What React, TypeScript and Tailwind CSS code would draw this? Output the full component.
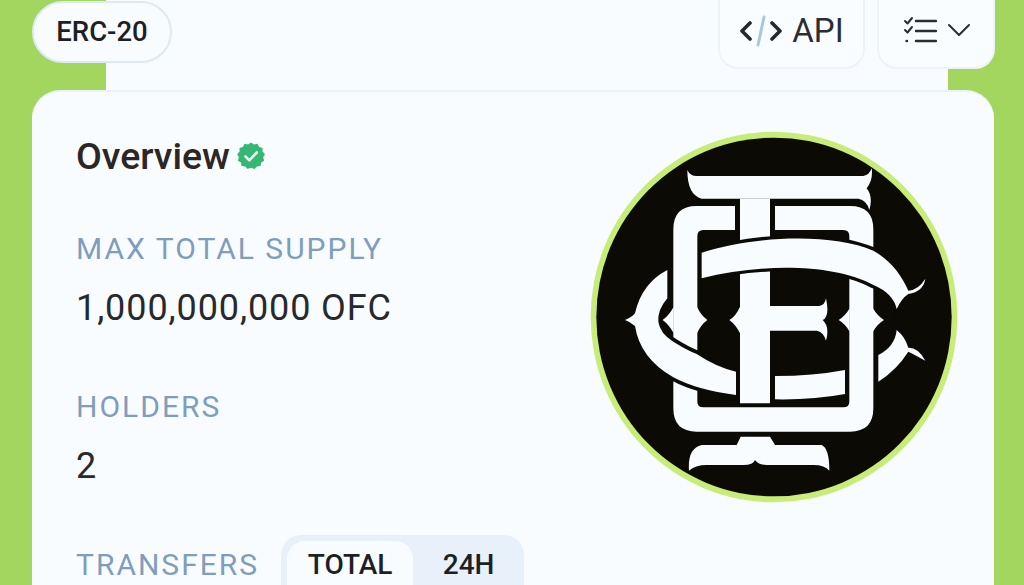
import React from "react";

function Logo() {
  const w = "#f8fcff";
  const k = "#0b0a05";
  return (
    <svg viewBox="0 0 1170 1170" className="w-[390px] h-[390px]">
      <ellipse cx="582" cy="591" rx="550" ry="556" fill="#c8ec78" />
      <ellipse cx="582" cy="591" rx="533" ry="538" fill={k} />
      {/* frame */}
      <path fillRule="evenodd" fill={w} d="M350 258H810Q880 258 880 328V865Q880 935 810 935H350Q280 935 280 865V328Q280 258 350 258ZM370 330Q352 330 352 348V845Q352 862 370 862H790Q808 862 808 845V348Q808 330 790 330Z" />
      {/* gaps beside the T stem */}
      <rect x="465" y="250" width="120" height="610" fill={k} />
      {/* lower left arc */}
      <path fill={w} stroke={k} strokeWidth="22" paintOrder="stroke" d="M262 450V535Q232 570 235 605Q240 640 280 665Q320 690 350 702Q410 742 468 755V825Q350 810 280 772Q180 715 165 618Q150 605 135 600Q155 592 165 580Q185 490 262 450Z" />
      <rect x="468" y="740" width="12" height="100" fill={k} />
      {/* T stem and E */}
      <path fill={w} d="M480 236H570V380H480ZM480 420H570V558H718Q735 555 738 535Q750 590 728 600Q750 620 738 662Q730 635 710 632H570V850H480V640Q468 615 448 600Q468 588 480 560Z" />
      {/* spurs on frame sides */}
      <path fill={w} d="M248 600Q268 585 281 560V640Q268 615 248 600Z" />
      <path fill={w} d="M382 600Q362 585 351 560V640Q362 615 382 600Z" />
      <path fill={w} d="M912 600Q892 588 879 565V635Q892 612 912 600Z" />
      <path fill={w} d="M776 600Q796 588 809 565V635Q796 612 776 600Z" />
      {/* bottom E bar */}
      <path fill={w} d="M585 768Q700 768 795 750V822Q700 840 585 838Z" />
      {/* upper swoosh */}
      <path fill={w} stroke={k} strokeWidth="20" paintOrder="stroke" d="M365 398C530 345 760 340 880 392C930 420 965 465 985 512Q1015 510 1036 476Q1030 515 985 522Q965 535 950 567Q940 520 880 495C760 430 540 430 365 475Z" />
      {/* lower right end */}
      <path fill={w} d="M895 705Q945 680 950 630Q975 650 985 683Q1015 682 1036 722Q1005 705 985 695Q950 750 895 785Z" />
      {/* top bar */}
      <path fill={w} d="M322 150Q330 168 350 168H850Q868 165 875 145Q880 180 860 205Q880 230 868 270Q860 240 835 236H365Q322 225 322 150Z" />
      {/* bottom bar */}
      <path fill={w} d="M365 975H470L482 950H570L585 975H725Q748 985 748 1052Q735 1035 700 1035H560Q535 1035 525 1020Q520 1035 490 1035H380Q345 1035 327 1052Q322 985 365 975Z" />
    </svg>
  );
}

function Verified() {
  return (
    <svg viewBox="0 0 28 28" className="w-[28px] h-[28px] shrink-0">
      <path fill="#35b873" d="M14 0.5l3 2 3.500-.7 1.700 3.100 3.400 1.100-.1 3.600 2.500 2.600-1.800 3.100 1 3.400-3 1.900-.7 3.500-3.600.3-2.400 2.700-3.500-1.300-3.400 1.300-2.400-2.700-3.600-.3-.7-3.500-3-1.900 1-3.400L.1 12.200l2.500-2.600-.1-3.600 3.400-1.100 1.700-3.100 3.500.7z" />
      <path d="M8.500 14.500l3.800 3.800 7.500-7.800" fill="none" stroke="#e8f8ef" strokeWidth="2.600" strokeLinecap="round" strokeLinejoin="round" />
    </svg>
  );
}

function ListCheck() {
  return (
    <svg viewBox="0 0 34 28" className="w-[34px] h-[28px]" fill="none" stroke="#2a2d31" strokeLinecap="round" strokeLinejoin="round">
      <path strokeWidth="2" d="M2 5l2.500 2.500L9 2M2 14l2.500 2.500L9 11" />
      <path strokeWidth="2.400" d="M13 5H33M13 15H33M13 25H33M3.500 25H4" />
    </svg>
  );
}

function Label({ children }: { children: React.ReactNode }) {
  return <div className="text-[30px] leading-[34px] tracking-[2px] text-[#7f9dbc]">{children}</div>;
}

function Value({ children }: { children: React.ReactNode }) {
  return <div className="text-[36px] leading-[40px] mt-[22px] tracking-[0.9px] text-[#27292d]">{children}</div>;
}

export default function App() {
  return (
    <div className="h-[585px] overflow-hidden bg-[#a3d65f] pl-[32px] pr-[30px] font-['Roboto',sans-serif]">
      <div className="relative h-[90px] flex items-start justify-between">
        <div className="absolute left-[74px] right-[46px] top-0 bottom-0 bg-[#f9fcff]" />
        <div className="relative mt-[1px] w-[140px] h-[62px] rounded-full bg-[#f9fcff] border-2 border-[#dfe9f4] flex items-center justify-center text-[27.500px] font-medium text-[#1c1f23]">
          ERC-20
        </div>
        <div className="relative flex gap-[12px] mr-[-1px]">
          <div className="w-[147px] h-[69px] pb-[5px] rounded-b-[20px] bg-[#fafdff] border-2 border-t-0 border-[#eef3f9] flex items-center justify-center gap-[9px] text-[33px] text-[#2a2d31]">
            <svg viewBox="0 0 44 34" className="w-[44px] h-[34px]" fill="none" strokeLinecap="round" strokeLinejoin="round">
              <path d="M11 9L3 17L11 25M33 9L41 17L33 25" stroke="#25282c" strokeWidth="3.600" />
              <path d="M25 3L19 31" stroke="#abc6dd" strokeWidth="3" />
            </svg>
            <span>API</span>
          </div>
          <div className="w-[118px] h-[69px] pb-[7px] rounded-b-[20px] bg-[#fafdff] border-2 border-t-0 border-[#eef3f9] flex items-center justify-center gap-[11px]">
            <ListCheck />
            <svg viewBox="0 0 22 14" className="w-[22px] h-[14px]" fill="none" stroke="#2a2d31" strokeWidth="2" strokeLinecap="round" strokeLinejoin="round">
              <path d="M1 2L11 12L21 2" />
            </svg>
          </div>
        </div>
      </div>
      <div className="h-[520px] rounded-t-[28px] border-t-2 border-[#eaf1f8] bg-[#f9fcff] pl-[44px] pr-[24px] flex justify-between">
        <div className="pt-[41px]">
          <div className="flex items-center gap-[7px]">
            <span className="text-[37.500px] leading-[46px] font-medium text-[#2c2624]">Overview</span>
            <Verified />
          </div>
          <div className="mt-[53px]"><Label>MAX TOTAL SUPPLY</Label></div>
          <Value>1,000,000,000 OFC</Value>
          <div className="mt-[62px]"><Label>HOLDERS</Label></div>
          <Value>2</Value>
          <div className="mt-[62px] flex items-start gap-[22px]">
            <Label>TRANSFERS</Label>
            <div className="mt-[-13px] w-[243px] h-[80px] rounded-[20px] bg-[#e8f1fa] p-[6px] flex">
              <div className="w-[126px] h-[68px] rounded-[18px] bg-[#f9fcff] flex justify-center pt-[8px] text-[28px] leading-[32px] font-medium text-[#1c1f23]">TOTAL</div>
              <div className="flex-1 flex justify-center pl-[6px] pt-[8px] text-[28px] leading-[32px] font-medium text-[#1c1f23]">24H</div>
            </div>
          </div>
        </div>
        <div className="pt-[28px]">
          <Logo />
        </div>
      </div>
    </div>
  );
}
